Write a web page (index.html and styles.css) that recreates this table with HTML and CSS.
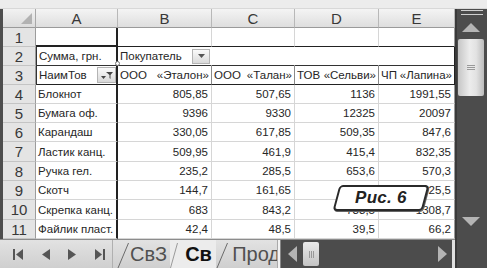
FILE: index.html
```html
<!DOCTYPE html>
<html>
<head>
<meta charset="utf-8">
<link rel="stylesheet" href="styles.css">
</head>
<body>
<div class="app">
  <div class="topbar"></div>
  <div class="leftedge"></div>
  <div class="sheet">
    <div class="corner"><span class="corner-tri"></span></div>
    <div class="colhead">A</div>
    <div class="colhead">B</div>
    <div class="colhead">C</div>
    <div class="colhead">D</div>
    <div class="colhead">E</div>

    <div class="rowhead">1</div>
    <div class="cell a r1"></div>
    <div class="cell r1t"></div>
    <div class="cell r1t"></div>
    <div class="cell r1t"></div>
    <div class="cell r1t e"></div>

    <div class="rowhead">2</div>
    <div class="cell a pv-left r2">Сумма, грн.</div>
    <div class="cell r2 field">
      <span class="field-label">Покупатель</span>
      <span class="dd-btn"><svg width="7" height="4" viewBox="0 0 7 4"><path d="M0 0h7L3.5 4z" fill="#555"/></svg></span>
    </div>
    <div class="cell r2 noright"></div>
    <div class="cell r2 noright"></div>
    <div class="cell r2 pv-right"></div>

    <div class="rowhead">3</div>
    <div class="cell a pv-left r3">
      <span>НаимТов</span>
      <span class="flt-btn"><svg width="12" height="9" viewBox="0 0 12 9"><path d="M0 5h5L2.5 8z" fill="#444"/><path d="M5 1h7L9.5 4v4l-1-1V4z" fill="#444"/></svg></span>
    </div>
    <div class="cell r3 just"><span>ООО</span><span>«Эталон»</span></div>
    <div class="cell r3 just"><span>ООО</span><span>«Талан»</span></div>
    <div class="cell r3 just"><span>ТОВ</span><span>«Сельви»</span></div>
    <div class="cell r3 just pv-right"><span>ЧП</span><span>«Лапина»</span></div>

    <div class="rowhead">4</div>
    <div class="cell a">Блокнот</div>
    <div class="cell num">805,85</div>
    <div class="cell num">507,65</div>
    <div class="cell num">1136</div>
    <div class="cell num e">1991,55</div>

    <div class="rowhead">5</div>
    <div class="cell a">Бумага оф.</div>
    <div class="cell num">9396</div>
    <div class="cell num">9330</div>
    <div class="cell num">12325</div>
    <div class="cell num e">20097</div>

    <div class="rowhead">6</div>
    <div class="cell a">Карандаш</div>
    <div class="cell num">330,05</div>
    <div class="cell num">617,85</div>
    <div class="cell num">509,35</div>
    <div class="cell num e">847,6</div>

    <div class="rowhead">7</div>
    <div class="cell a">Ластик канц.</div>
    <div class="cell num">509,95</div>
    <div class="cell num">461,9</div>
    <div class="cell num">415,4</div>
    <div class="cell num e">832,35</div>

    <div class="rowhead">8</div>
    <div class="cell a">Ручка гел.</div>
    <div class="cell num">235,2</div>
    <div class="cell num">285,5</div>
    <div class="cell num">653,6</div>
    <div class="cell num e">570,3</div>

    <div class="rowhead">9</div>
    <div class="cell a">Скотч</div>
    <div class="cell num">144,7</div>
    <div class="cell num">161,65</div>
    <div class="cell num">364,5</div>
    <div class="cell num e">725,5</div>

    <div class="rowhead">10</div>
    <div class="cell a">Скрепка канц.</div>
    <div class="cell num">683</div>
    <div class="cell num">843,2</div>
    <div class="cell num">733,5</div>
    <div class="cell num e">1308,7</div>

    <div class="rowhead">11</div>
    <div class="cell a">Файлик пласт.</div>
    <div class="cell num">42,4</div>
    <div class="cell num">48,5</div>
    <div class="cell num">39,5</div>
    <div class="cell num e">66,2</div>

    <span class="handle"></span>
    <div class="badge"><span class="badge-text">Рис. 6</span></div>
  </div>

  <div class="vscroll">
    <div class="split"></div>
    <div class="vbtn"><svg width="18" height="9" viewBox="0 0 18 9"><path d="M0 9h18L9 0z" fill="#b4b4b4"/></svg></div>
    <div class="vthumb"><span class="grip-h"></span></div>
    <div class="vtrack"></div>
    <div class="vbtn down"><svg width="18" height="9" viewBox="0 0 18 9"><path d="M0 0h18L9 9z" fill="#b4b4b4"/></svg></div>
  </div>
  <div class="rightedge"></div>

  <div class="tabbar">
    <div class="nav">
      <svg class="n1" width="10" height="11" viewBox="0 0 10 11"><rect x="0" y="0" width="2" height="11" fill="#555"/><path d="M3 5.5L10 0v11z" fill="#555"/></svg>
      <svg class="n2" width="9" height="11" viewBox="0 0 9 11"><path d="M0 5.5L8 0v11z" fill="#555"/></svg>
      <svg class="n3" width="9" height="11" viewBox="0 0 9 11"><path d="M9 5.5L1 0v11z" fill="#555"/></svg>
      <svg class="n4" width="10" height="11" viewBox="0 0 10 11"><path d="M7 5.5L0 0v11z" fill="#555"/><rect x="8" y="0" width="2" height="11" fill="#555"/></svg>
    </div>
    <div class="tabs">
      <svg class="slash" width="12" height="28" viewBox="0 0 12 28"><path d="M1 28L11.5 3" stroke="#6a6a6a" fill="none"/></svg>
      <span class="tab">СвЗ</span>
      <div class="tab-active">
        <svg class="slash-faint" width="8" height="28" viewBox="0 0 8 28"><path d="M0.5 28L7.5 3" stroke="#9a9a9a" fill="none"/></svg>
        <span class="tab-active-label">Св</span>
      </div>
      <svg class="slash" width="12" height="28" viewBox="0 0 12 28"><path d="M1 28L11.5 3" stroke="#6a6a6a" fill="none"/></svg>
      <span class="tab tab-last">Прод</span>
    </div>
    <div class="tabsplit"></div>
    <div class="hscroll">
      <div class="hbtn"><svg width="9" height="16" viewBox="0 0 9 16"><path d="M0 8L9 0v16z" fill="#b4b4b4"/></svg></div>
      <div class="hthumb"><span class="grip-v"></span></div>
      <div class="htrack"></div>
      <div class="hbtn right"><svg width="9" height="16" viewBox="0 0 9 16"><path d="M9 8L0 0v16z" fill="#b4b4b4"/></svg></div>
    </div>
    <div class="hsep"></div>
  </div>
  <div class="scorner"></div>
  <div class="bottompad"></div>
</div>
</body>
</html>
```

FILE: styles.css
```css
* { box-sizing: border-box; }
html, body { margin: 0; padding: 0; background: #ffffff; }
body { width: 491px; height: 274px; overflow: hidden; font-family: "Liberation Sans", Arial, sans-serif; }

.app {
  display: grid;
  grid-template-columns: 3px 452px 32px 4px;
  grid-template-rows: 9px 230px 29px 6px;
  width: 491px;
  height: 274px;
}

.topbar { grid-column: 1 / 4; grid-row: 1; background: #ececec; border-bottom: 1px solid #d8d8d8; }
.leftedge { grid-column: 1; grid-row: 2 / 4; background: #4e4e4e; }
.rightedge { grid-column: 4; grid-row: 1 / 5; background: #ffffff; }
.bottompad { grid-column: 1 / 5; grid-row: 4; background: #ffffff; }

.sheet {
  grid-column: 2; grid-row: 2;
  position: relative;
  display: grid;
  grid-template-columns: 33px 82px 94px 83px 84px 76px;
  grid-template-rows: 19px 19px 19px 19px 19px 19px 19px 20px 19px 19px 20px 19px;
  background: #ffffff;
  color: #262626;
  font-size: 11px;
}

.corner {
  position: relative;
  background: linear-gradient(#f2f2f2, #dcdcdc);
  border-right: 1px solid #a8a8a8;
  border-bottom: 1px solid #9a9a9a;
}
.corner-tri {
  position: absolute; right: 3px; bottom: 3px;
  width: 0; height: 0;
  border-left: 11px solid transparent;
  border-bottom: 11px solid #b2b2b2;
}
.colhead {
  display: flex; align-items: center; justify-content: center;
  background: linear-gradient(#f4f4f4, #dedede);
  border-right: 1px solid #b8b8b8;
  border-bottom: 1px solid #9a9a9a;
  font-size: 15px; color: #383838;
}
.rowhead {
  display: flex; align-items: center; justify-content: center;
  background: #e4e4e4;
  border-right: 1px solid #9c9c9c;
  border-bottom: 1px solid #c4c4c4;
  font-size: 15px; color: #383838;
}

.cell {
  display: flex; align-items: center;
  padding: 0 2px;
  border-right: 1px solid #d6d6d6;
  border-bottom: 1px solid #d6d6d6;
  white-space: nowrap; overflow: hidden;
  font-size: 11.5px;
}
.cell.a { border-right: 2px solid #222; }
.cell.r1 { border-bottom: 2px solid #222; }
.cell.r1t { border-bottom: 1px solid #222; }
.cell.e { border-right: 1px solid #9a9a9a; }
.cell.num { justify-content: flex-end; padding-right: 3px; }
.cell.r2 { border-bottom: 1px solid #333; }
.cell.r3 { border-bottom: 1px solid #222; border-right-color: #8a8a8a; }
.cell.pv-left { border-left: 1px solid #333; }
.cell.pv-right { border-right: 1px solid #222; }
.cell.noright { border-right-color: #ffffff; }
.cell.a.r3, .cell.a.r2 { border-right: 2px solid #222; }
.cell.r3.a { justify-content: space-between; padding-right: 0; }
.cell.just { justify-content: space-between; padding: 0 2px 0 2px; }

.field { justify-content: space-between; padding-right: 1px; border-right: 1px solid #ffffff; }
.dd-btn {
  display: flex; align-items: center; justify-content: center;
  width: 18px; height: 15px;
  background: linear-gradient(#fafafa, #dadada);
  border: 1px solid #b4b4b4;
}
.flt-btn {
  display: flex; align-items: center; justify-content: center;
  width: 19px; height: 16px;
  background: linear-gradient(#fafafa, #d8d8d8);
  border: 1px solid #b4b4b4;
}

.handle {
  position: absolute; left: 112px; top: 52px;
  width: 5px; height: 5px; border-radius: 50%;
  background: #fff; border: 1px solid #777;
}

.badge {
  position: absolute; left: 333px; top: 176px;
  width: 90px; height: 26px;
  display: flex; align-items: center; justify-content: center;
  background: #ffffff;
  border: 2px solid #2a2a2a;
  border-radius: 4px;
  transform: skewX(-15deg);
  box-shadow: 1px 1px 0 #666;
}
.badge-text {
  transform: skewX(15deg);
  font-weight: bold; font-style: italic;
  font-size: 17px; color: #222;
  letter-spacing: 0.3px;
}

.vscroll {
  grid-column: 3; grid-row: 2;
  display: flex; flex-direction: column;
  background: #4c4c4c;
  border-left: 2px solid #3a3a3a;
  padding: 0 3px 0 1px;
}
.split { height: 5px; margin: 1px 1px 0 3px; border-top: 1px solid #d0d0d0; border-bottom: 1px solid #d0d0d0; }
.vbtn { height: 24px; display: flex; align-items: center; justify-content: center; }
.vbtn.down { height: 22px; margin-bottom: 7px; }
.vthumb {
  height: 57px;
  display: flex; align-items: center; justify-content: center;
  background: linear-gradient(90deg, #c6c6c6, #ececec 45%, #e2e2e2 70%, #bcbcbc);
  border-radius: 2px;
}
.grip-h { width: 8px; height: 5px; border-top: 1px solid #999; border-bottom: 1px solid #999; position: relative; }
.grip-h::after { content: ""; position: absolute; left: 0; right: 0; top: 1px; border-top: 1px solid #999; }
.vtrack { flex: 1; }

.tabbar {
  grid-column: 2; grid-row: 3;
  display: flex; align-items: stretch;
  background: linear-gradient(#e2e2e2, #cfcfcf);
  border-top: 1px solid #8c8c8c;
  margin-left: -3px;
}
.nav {
  width: 113px; flex: none;
  display: flex; align-items: center;
  padding-left: 13px;
  border-right: 1px solid #b0b0b0;
}
.nav .n2 { margin-left: 19px; }
.nav .n3 { margin-left: 16px; }
.nav .n4 { margin-left: 19px; }

.tabs {
  width: 164px; flex: none;
  display: flex; align-items: stretch;
  padding-left: 4px;
  font-size: 20px; color: #505050;
}
.slash { flex: none; }
.tab { display: flex; align-items: center; padding: 0 1px 0 1px; }
.tab-last { padding-left: 4px; }
.tab-active {
  display: flex; align-items: center;
  width: 46px; flex: none;
  margin-left: 2px;
  background: #ececec;
  font-weight: bold; color: #111;
}
.slash-faint { flex: none; margin-right: 7px; }

.tabsplit { width: 4px; flex: none; background: #f2f2f2; border-left: 1px solid #aaa; border-right: 1px solid #888; }
.hscroll {
  flex: 1;
  display: flex; align-items: stretch;
  background: #4c4c4c;
  padding: 2px 0 2px 0;
}
.hbtn { width: 22px; display: flex; align-items: center; justify-content: center; }
.hbtn.right { width: 14px; justify-content: flex-start; }
.hthumb {
  width: 16px;
  display: flex; align-items: center; justify-content: center;
  background: linear-gradient(#e8e8e8, #c4c4c4);
  border-radius: 2px;
}
.grip-v { width: 5px; height: 7px; border-left: 1px solid #999; border-right: 1px solid #999; position: relative; }
.grip-v::after { content: ""; position: absolute; top: 0; bottom: 0; left: 1px; border-left: 1px solid #999; }
.htrack { flex: 1; }
.hsep { width: 3px; flex: none; background: #e0e0e0; }
.scorner { grid-column: 3; grid-row: 3; background: #4c4c4c; border-left: 2px solid #3a3a3a; }
```
